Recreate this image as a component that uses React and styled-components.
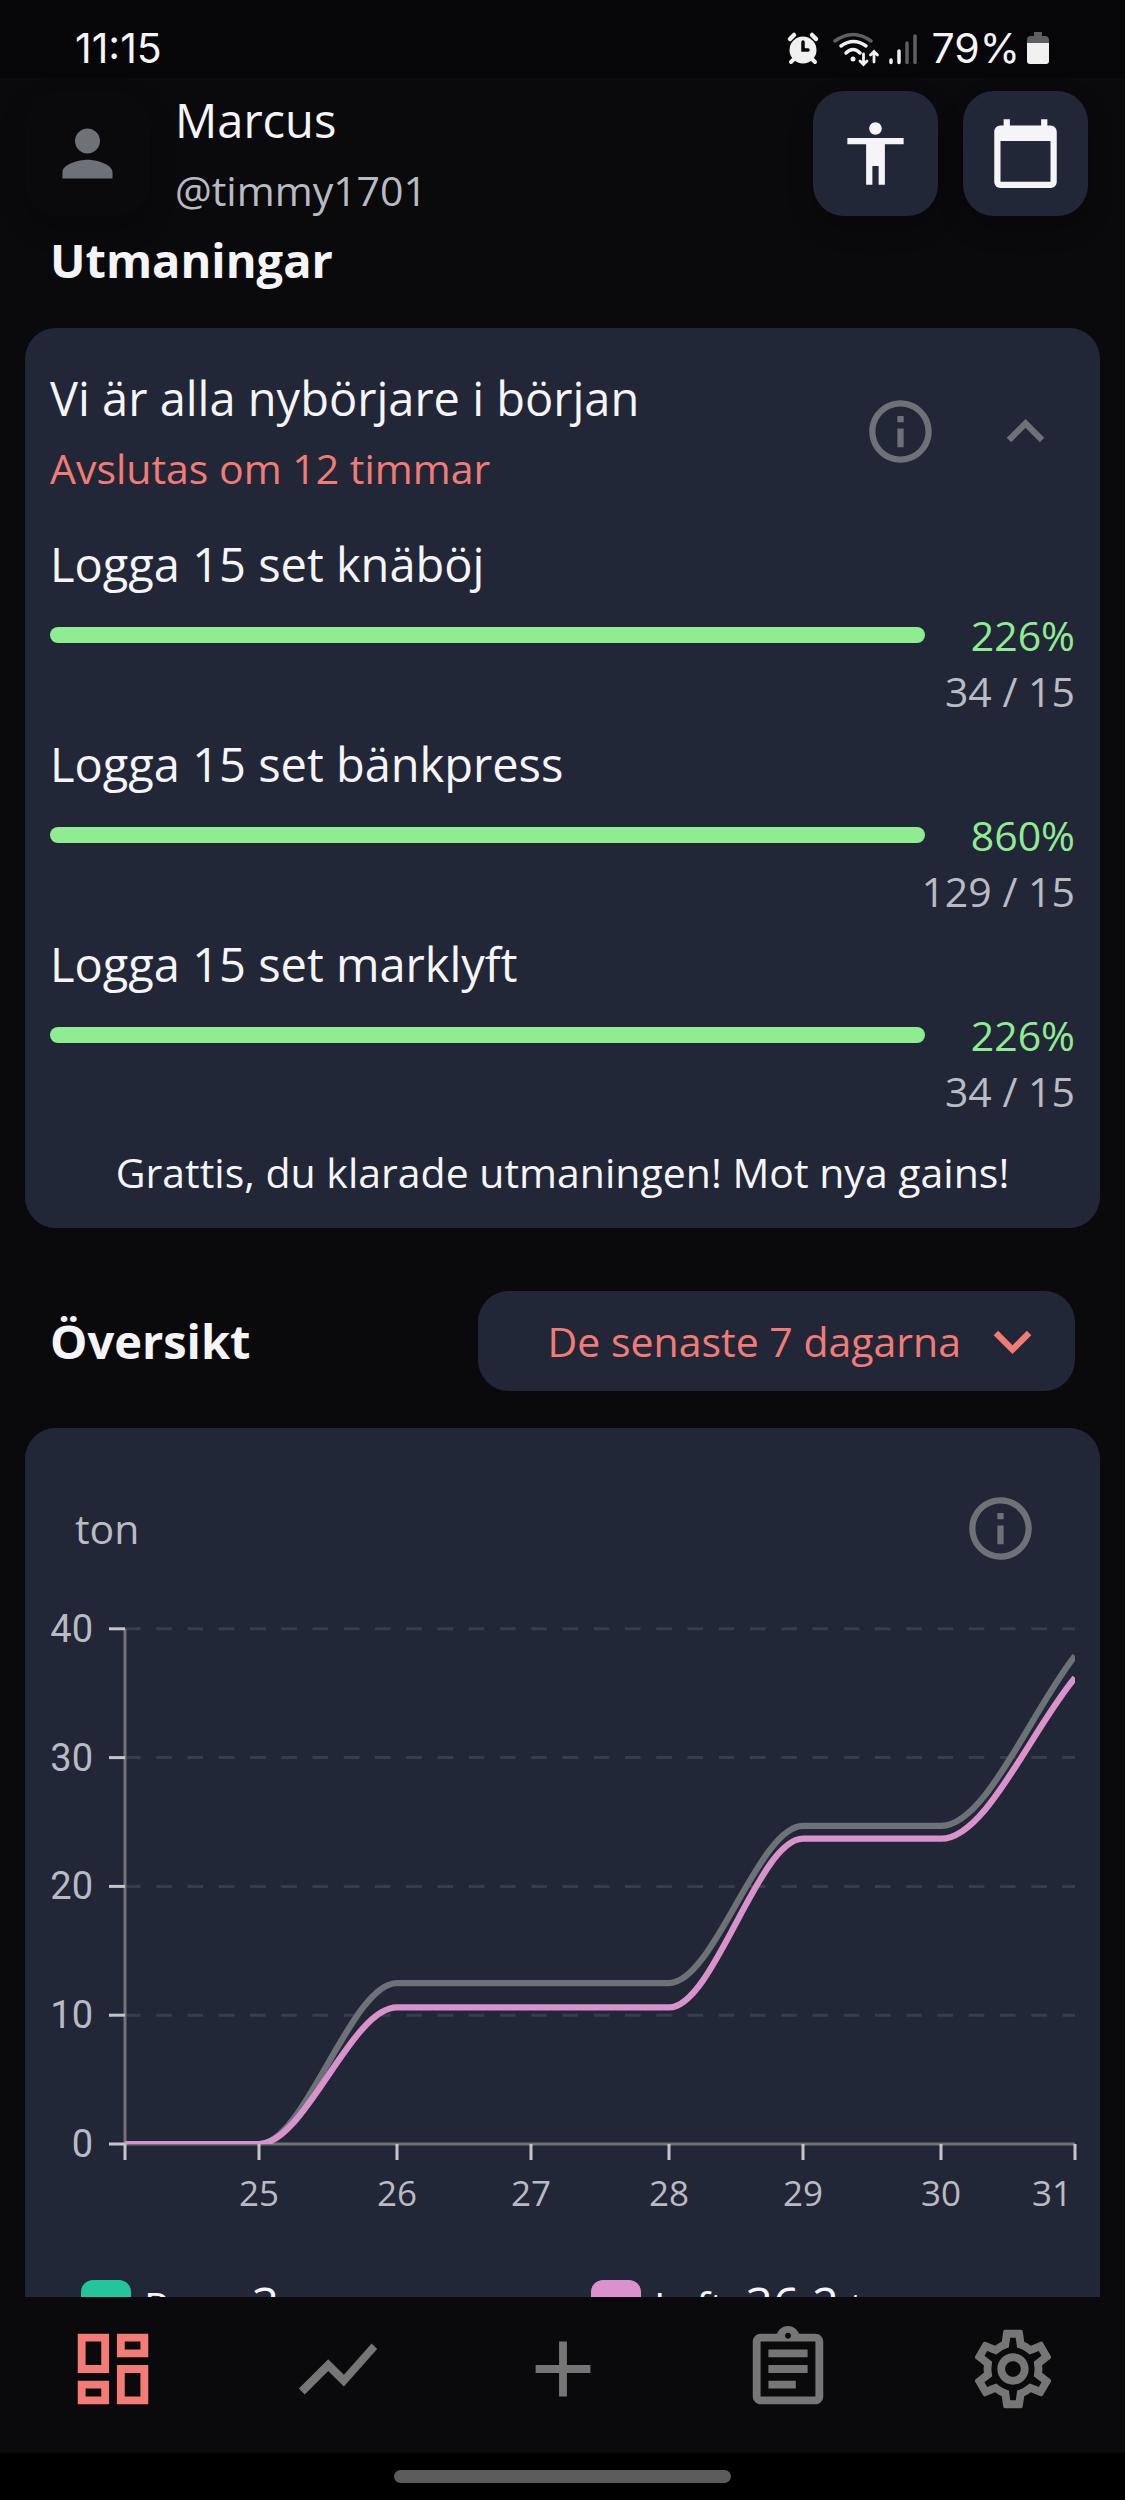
import React, { useState } from "react"
import styled, { createGlobalStyle, ThemeProvider } from "styled-components"
import {
    MdAccessibility,
    MdAdd,
    MdCalendarToday,
    MdInfoOutline,
    MdKeyboardArrowDown,
    MdKeyboardArrowUp,
    MdOutlineAssignment,
    MdOutlineDashboard,
    MdOutlineSettings,
    MdPerson,
    MdShowChart
} from "react-icons/md"

const theme = {
    color: {
        background: "#0a0a0c",
        status: "#060608",
        card: "#222737",
        text: "#f5f5f7",
        muted: "#b9bbc2",
        icon: "#6d7278",
        nav: "#767676",
        primary: "#f27b76",
        success: "#90ec91",
        pink: "#da92cc",
        green: "#23c59c"
    }
}

const GlobalStyle = createGlobalStyle`
    * {
        box-sizing: border-box;
        margin: 0;
        padding: 0;
    }

    body {
        background: #0a0a0c;
        color: #f5f5f7;
        font-family: "Open Sans", "Noto Sans", sans-serif;
        font-size: 41px;
        line-height: 56px;
    }

    button, select {
        border: none;
        background: none;
        color: inherit;
        font: inherit;
        cursor: pointer;
    }

    svg {
        display: block;
        flex-shrink: 0;
    }
`

const Screen = styled.div`
    display: flex;
    flex-direction: column;
    height: 100vh;
`

const StatusBar = styled.div`
    display: flex;
    align-items: center;
    justify-content: space-between;
    height: 78px;
    padding: 18px 75px 0;
    flex-shrink: 0;
    background: ${({ theme }) => theme.color.status};
    font-family: Inter, Roboto, sans-serif;
    font-size: 41px;
    line-height: 48px;
`

const StatusIcons = styled.div`
    display: flex;
    align-items: center;
`

const Scroll = styled.main`
    flex: 1;
    min-height: 0;
    overflow-y: auto;
    scrollbar-width: none;
`

const Header = styled.header`
    display: flex;
    align-items: center;
    gap: 25px;
    height: 150px;
    padding: 0 37px 0 25px;
`

const Tile = styled.button`
    display: flex;
    align-items: center;
    justify-content: center;
    width: 125px;
    height: 125px;
    border-radius: 31px;
    background: ${({ theme, $plain }) => ($plain ? theme.color.background : theme.color.card)};
    color: ${({ theme, $plain }) => ($plain ? theme.color.icon : theme.color.text)};
    box-shadow: 0 12px 24px rgba(0, 0, 0, 0.25);
`

const TitleGroup = styled.div`
    display: flex;
    flex: 1;
    flex-direction: column;
    gap: 10px;
`

const Title = styled.p`
    font-size: 47px;
    line-height: 64px;
`

const Handle = styled.p`
    color: ${({ theme }) => theme.color.muted};
`

const Deadline = styled.p`
    color: ${({ theme }) => theme.color.primary};
`

const Heading = styled.h2`
    font-size: 47px;
    font-weight: 700;
    line-height: 64px;
`

const Section = styled.section`
    padding: 0 25px;

    & > ${Heading} {
        padding: 0 25px 36px;
    }
`

const Card = styled.div`
    padding: ${({ $chart }) => ($chart ? "50px 25px" : "38px 25px 28px")};
    border-radius: 31px;
    background: ${({ theme }) => theme.color.card};
`

const CardHeader = styled.div`
    display: flex;
    align-items: center;
    gap: 25px;
`

const IconButton = styled.button`
    display: flex;
    align-items: center;
    justify-content: center;
    width: 100px;
    height: 100px;
    color: ${({ theme }) => theme.color.icon};
`

const Goals = styled.ul`
    display: flex;
    flex-direction: column;
    gap: 13px;
    padding: 36px 0 25px;
    list-style: none;
`

const ProgressRow = styled.div`
    display: flex;
    align-items: center;
    padding-top: 11px;
    color: ${({ theme }) => theme.color.success};
`

const Track = styled.div`
    flex: 1;
    height: 16px;
    overflow: hidden;
    border-radius: 8px;
    background: #3a3f4d;
`

const Fill = styled.div`
    height: 100%;
    background: ${({ theme }) => theme.color.success};
`

const Percent = styled.span`
    width: 150px;
    text-align: right;
`

const Count = styled.p`
    color: ${({ theme }) => theme.color.muted};
    text-align: right;
`

const Message = styled.p`
    text-align: center;
`

const OverviewBar = styled.div`
    display: flex;
    align-items: center;
    justify-content: space-between;
    padding: 63px 25px 37px;
`

const SelectBox = styled.div`
    display: flex;
    align-items: center;
    width: 597px;
    height: 100px;
    padding-right: 25px;
    border-radius: 31px;
    background: ${({ theme }) => theme.color.card};
    color: ${({ theme }) => theme.color.primary};

    select {
        flex: 1;
        min-width: 0;
        height: 100%;
        padding-right: 14px;
        appearance: none;
        text-align-last: right;
        outline: none;
    }
`

const ChartHeader = styled.div`
    display: flex;
    align-items: center;
    justify-content: space-between;
    padding: 0 25px;
    color: ${({ theme }) => theme.color.muted};
`

const ChartSvg = styled.svg`
    width: 100%;
    height: auto;
    overflow: visible;
    fill: ${({ theme }) => theme.color.muted};
`

const Legend = styled.ul`
    display: grid;
    grid-template-columns: 1fr 1fr;
    gap: 26px;
    padding: 34px 0 0 31px;
    list-style: none;
`

const LegendItem = styled.li`
    display: flex;
    align-items: center;
    gap: 13px;
    line-height: 64px;

    strong {
        font-size: 47px;
        font-weight: 400;
    }
`

const Swatch = styled.span`
    width: 50px;
    height: 50px;
    border-radius: 12px;
    background: ${({ $color }) => $color};
`

const Nav = styled.nav`
    display: flex;
    flex-shrink: 0;
    height: 156px;
    padding-bottom: 12px;
    background: ${({ theme }) => theme.color.background};
`

const NavLink = styled.a`
    display: flex;
    flex: 1;
    align-items: center;
    justify-content: center;
    color: ${({ theme, $active }) => ($active ? theme.color.primary : theme.color.nav)};
`

const GestureBar = styled.div`
    display: flex;
    align-items: center;
    justify-content: center;
    height: 47px;
    flex-shrink: 0;
    background: #000;

    span {
        width: 30%;
        height: 13px;
        border-radius: 7px;
        background: #5c5c5c;
    }
`

const GOALS = [
    { name: "Logga 15 set knäböj", done: 34, target: 15 },
    { name: "Logga 15 set bänkpress", done: 129, target: 15 },
    { name: "Logga 15 set marklyft", done: 34, target: 15 }
]

const NAV_ITEMS = [
    { label: "Översikt", icon: MdOutlineDashboard, active: true },
    { label: "Statistik", icon: MdShowChart },
    { label: "Lägg till", icon: MdAdd },
    { label: "Logg", icon: MdOutlineAssignment },
    { label: "Inställningar", icon: MdOutlineSettings }
]

const DAYS = [
    { label: "", x: 75, previous: 0, current: 0 },
    { label: "25", x: 209, previous: 0, current: 0 },
    { label: "26", x: 347, previous: 12.5, current: 10.6 },
    { label: "27", x: 481, previous: 12.5, current: 10.6 },
    { label: "28", x: 619, previous: 12.5, current: 10.6 },
    { label: "29", x: 753, previous: 24.7, current: 23.7 },
    { label: "30", x: 891, previous: 24.7, current: 23.7 },
    { label: "31", x: 1025, previous: 37.9, current: 36.2 }
]

const BASE = 566
const toY = (value) => BASE - value * 12.88

// every inner point has a flat tangent, only the last one keeps its slope
const linePath = (key) =>
    DAYS.map((day, i) => {
        const y = toY(day[key])
        if (i === 0) return `M${day.x} ${y}`
        const prev = DAYS[i - 1]
        const prevY = toY(prev[key])
        const third = (day.x - prev.x) / 3
        const endY = i === DAYS.length - 1 ? y - (y - prevY) / 3 : y
        return `C${prev.x + third} ${prevY} ${day.x - third} ${endY} ${day.x} ${y}`
    }).join(" ")

const Chart = () => (
    <ChartSvg viewBox="0 0 1025 660" role="img" aria-label="Lyft i ton per dag">
        <clipPath id="plot">
            <rect x="75" y="30" width="950" height={BASE - 30} />
        </clipPath>
        {[0, 10, 20, 30, 40].map((value) => (
            <g key={value}>
                {value > 0 && (
                    <path d={`M75 ${toY(value)}H1025`} stroke="#383d4a" strokeWidth="3" strokeDasharray="15.6 15.65" />
                )}
                <text x="43" y={toY(value) + 13} textAnchor="end" fontFamily="Roboto, sans-serif" fontSize="38">
                    {value}
                </text>
            </g>
        ))}
        <path d={`M75 ${toY(40)}V${BASE}H1025`} fill="none" stroke="#727377" strokeWidth="3" />
        <g clipPath="url(#plot)" fill="none" strokeWidth="6.25">
            <path d={linePath("previous")} stroke="#6d7278" />
            <path d={linePath("current")} stroke="#da92cc" />
        </g>
        {[0, 10, 20, 30, 40].map((value) => (
            <path key={value} d={`M59 ${toY(value)}h16`} stroke="#c4c5ca" strokeWidth="3" />
        ))}
        {DAYS.map((day) => (
            <g key={day.x}>
                <path d={`M${day.x} ${BASE}v16`} stroke="#c4c5ca" strokeWidth="3" />
                <text
                    x={day.x === 1025 ? 1022 : day.x}
                    y={BASE + 62}
                    textAnchor={day.x === 1025 ? "end" : "middle"}
                    fontSize="35"
                >
                    {day.label}
                </text>
            </g>
        ))}
    </ChartSvg>
)

const SystemIcons = () => (
    <svg width="146" height="40" viewBox="0 0 146 40" fill="none" strokeLinecap="round" aria-hidden="true">
        {/* alarm */}
        <g stroke="#f0f0f0">
            <circle cx="17" cy="22" r="13.5" fill="#f0f0f0" stroke="none" />
            <path d="M4 11l4-4M30 11l-4-4" strokeWidth="4.5" />
            <path d="M8 31l-3 3M26 31l3 3" strokeWidth="4" />
            <path d="M17 14v8h5" stroke="#060608" strokeWidth="3.5" />
        </g>
        {/* wifi */}
        <path d="M49 13q18-13 36 0" stroke="#5f5f61" strokeWidth="3.5" />
        <path d="M55 18q12.500-9 25 0M60 25q7-7 14 0" stroke="#f0f0f0" strokeWidth="3.5" />
        <circle cx="67" cy="31" r="2.500" fill="#f0f0f0" />
        <path
            d="M77.500 26v10M74 33l3.500 3.500 3.500-3.500M88 34V23.500M84.500 27l3.500-3.500 3.500 3.500"
            stroke="#f0f0f0"
            strokeWidth="2.800"
        />
        {/* signal */}
        <path d="M105 32v2.500M113 23v11.500" stroke="#f0f0f0" strokeWidth="3.500" />
        <path d="M121 15v19.500M129 8v26.500" stroke="#5f5f61" strokeWidth="3.500" />
    </svg>
)

const Battery = () => (
    <svg width="30" height="40" viewBox="0 0 30 40" aria-hidden="true">
        <path d="M14 4h8v4h3q4 0 4 4v3H7v-3q0-4 4-4h3z" fill="#5f5f61" />
        <path d="M7 15h22v18q0 3-3 3H10q-3 0-3-3z" fill="#f0f0f0" />
    </svg>
)

const Challenge = () => {
    const [open, setOpen] = useState(true)

    return (
        <Card>
            <CardHeader>
                <TitleGroup>
                    <Title>Vi är alla nybörjare i början</Title>
                    <Deadline>Avslutas om 12 timmar</Deadline>
                </TitleGroup>
                <IconButton aria-label="Information">
                    <MdInfoOutline size={75} />
                </IconButton>
                <IconButton aria-label="Visa eller dölj" aria-expanded={open} onClick={() => setOpen(!open)}>
                    {open ? <MdKeyboardArrowUp size={75} /> : <MdKeyboardArrowDown size={75} />}
                </IconButton>
            </CardHeader>
            {open && (
                <>
                    <Goals>
                        {GOALS.map(({ name, done, target }) => {
                            const percent = Math.floor((done / target) * 100)
                            return (
                                <li key={name}>
                                    <Title>{name}</Title>
                                    <ProgressRow>
                                        <Track>
                                            <Fill style={{ width: `${Math.min(percent, 100)}%` }} />
                                        </Track>
                                        <Percent>{percent}%</Percent>
                                    </ProgressRow>
                                    <Count>
                                        {done} / {target}
                                    </Count>
                                </li>
                            )
                        })}
                    </Goals>
                    <Message>Grattis, du klarade utmaningen! Mot nya gains!</Message>
                </>
            )}
        </Card>
    )
}

const App = () => (
    <ThemeProvider theme={theme}>
        <GlobalStyle />
        <Screen>
            <StatusBar>
                <span>11:15</span>
                <StatusIcons>
                    <SystemIcons />
                    <span>79%</span>
                    <Battery />
                </StatusIcons>
            </StatusBar>
            <Scroll>
                <Header>
                    <Tile $plain aria-label="Profil">
                        <MdPerson size={75} />
                    </Tile>
                    <TitleGroup>
                        <Title>Marcus</Title>
                        <Handle>@timmy1701</Handle>
                    </TitleGroup>
                    <Tile aria-label="Kropp">
                        <MdAccessibility size={75} />
                    </Tile>
                    <Tile aria-label="Kalender">
                        <MdCalendarToday size={75} />
                    </Tile>
                </Header>
                <Section>
                    <Heading>Utmaningar</Heading>
                    <Challenge />
                </Section>
                <Section>
                    <OverviewBar>
                        <Heading>Översikt</Heading>
                        <SelectBox>
                            <select aria-label="Period" defaultValue="7">
                                <option value="7">De senaste 7 dagarna</option>
                                <option value="30">De senaste 30 dagarna</option>
                            </select>
                            <MdKeyboardArrowDown size={75} />
                        </SelectBox>
                    </OverviewBar>
                    <Card $chart>
                        <ChartHeader>
                            <span>ton</span>
                            <IconButton aria-label="Information om diagrammet">
                                <MdInfoOutline size={75} />
                            </IconButton>
                        </ChartHeader>
                        <Chart />
                        <Legend>
                            <LegendItem>
                                <Swatch $color={theme.color.green} />
                                <span>
                                    Pass: <strong>3</strong>
                                </span>
                            </LegendItem>
                            <LegendItem>
                                <Swatch $color={theme.color.pink} />
                                <span>
                                    Lyft: <strong>36.2</strong> t
                                </span>
                            </LegendItem>
                        </Legend>
                    </Card>
                </Section>
            </Scroll>
            <Nav>
                {NAV_ITEMS.map(({ label, icon: Icon, active }) => (
                    <NavLink key={label} href="#" aria-label={label} $active={active}>
                        <Icon size={94} />
                    </NavLink>
                ))}
            </Nav>
            <GestureBar>
                <span />
            </GestureBar>
        </Screen>
    </ThemeProvider>
)

export default App
